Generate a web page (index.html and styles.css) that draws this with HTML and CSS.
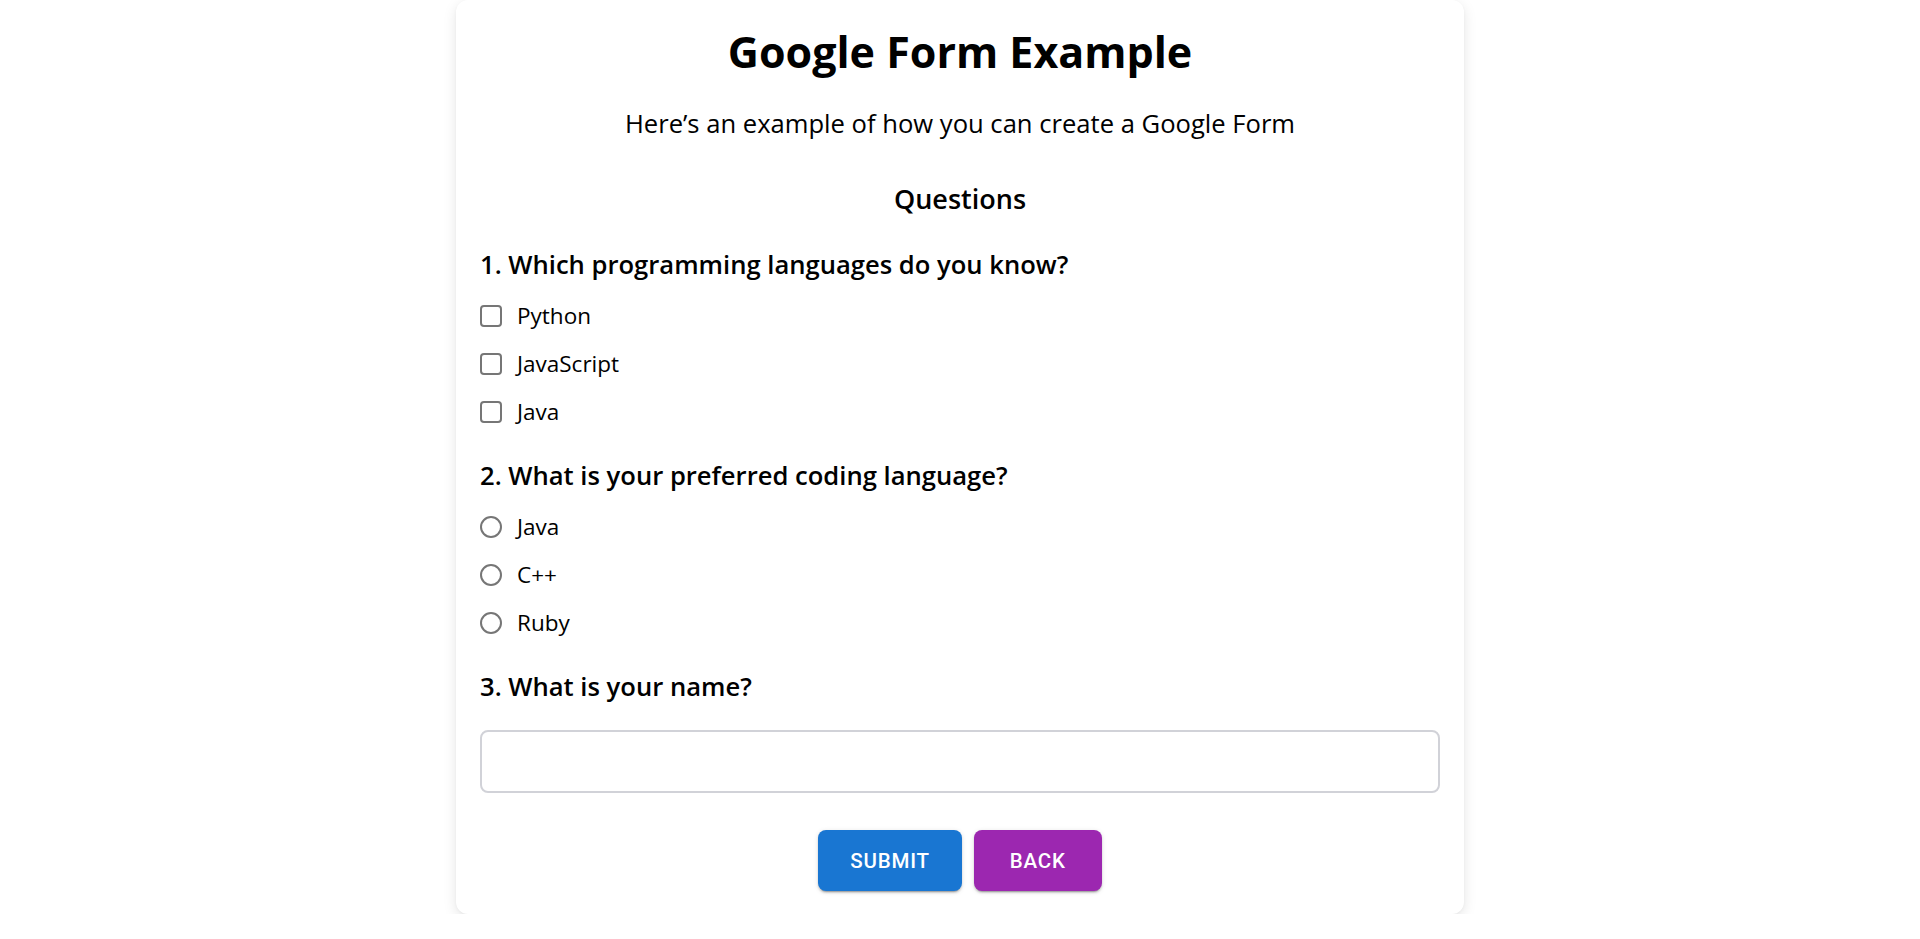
FILE: index.html
```html
<!DOCTYPE html>
<html lang="en">
<head>
<meta charset="utf-8">
<title>Google Form Example</title>
<link rel="stylesheet" href="styles.css">
</head>
<body>
<main class="card">
  <h1 class="title">Google Form Example</h1>
  <p class="subtitle">Here’s an example of how you can create a Google Form</p>
  <h2 class="section">Questions</h2>

  <section class="question">
    <h3 class="q-label">1. Which programming languages do you know?</h3>
    <label class="option"><input type="checkbox" class="check"><span>Python</span></label>
    <label class="option"><input type="checkbox" class="check"><span>JavaScript</span></label>
    <label class="option"><input type="checkbox" class="check"><span>Java</span></label>
  </section>

  <section class="question">
    <h3 class="q-label">2. What is your preferred coding language?</h3>
    <label class="option"><input type="radio" name="pref" class="radio"><span>Java</span></label>
    <label class="option"><input type="radio" name="pref" class="radio"><span>C++</span></label>
    <label class="option"><input type="radio" name="pref" class="radio"><span>Ruby</span></label>
  </section>

  <section class="question">
    <h3 class="q-label">3. What is your name?</h3>
    <input type="text" class="text-input">
  </section>

  <div class="actions">
    <button class="btn btn-submit" type="button">Submit</button>
    <button class="btn btn-back" type="button">Back</button>
  </div>
</main>
</body>
</html>
```

FILE: styles.css
```css
* { box-sizing: border-box; }

html, body {
  margin: 0;
  padding: 0;
  background: #ffffff;
}

body {
  font-family: "Open Sans", "Noto Sans", "Liberation Sans", sans-serif;
  color: #000;
}

.card {
  width: 1008px;
  margin: 0 auto;
  padding: 25px 24px 23px;
  background: #fff;
  border-radius: 12px;
  box-shadow: 0 4px 14px rgba(0, 0, 0, 0.10), 0 1px 3px rgba(0, 0, 0, 0.04);
  display: flex;
  flex-direction: column;
}

.title {
  margin: 0;
  font-size: 43px;
  line-height: 54px;
  font-weight: 700;
  text-align: center;
}

.subtitle {
  margin: 27px 0 0;
  font-size: 25.6px;
  line-height: 36px;
  font-weight: 400;
  text-align: center;
}

.section {
  margin: 39px 0 0;
  font-size: 27px;
  line-height: 36px;
  font-weight: 600;
  text-align: center;
}

.question {
  display: flex;
  flex-direction: column;
  margin-top: 24px;
}

.section + .question {
  margin-top: 32px;
}

.q-label {
  margin: 0 0 11px;
  font-size: 25.6px;
  line-height: 32px;
  font-weight: 600;
}

.option {
  display: flex;
  align-items: center;
  gap: 15px;
  height: 48px;
  font-size: 22.5px;
  line-height: 48px;
}

.check,
.radio {
  appearance: none;
  -webkit-appearance: none;
  margin: 0;
  width: 22px;
  height: 22px;
  border: 2px solid #767676;
  background: #fff;
  flex: none;
}

.check {
  border-radius: 4px;
}

.radio {
  border-radius: 50%;
}

.text-input {
  margin-top: 16px;
  width: 100%;
  height: 63px;
  border: 2px solid #d1d2d8;
  border-radius: 8px;
  background: #fff;
  font-size: 22px;
  padding: 0 16px;
  font-family: inherit;
}

.actions {
  display: flex;
  justify-content: center;
  gap: 12px;
  margin-top: 37px;
}

.btn {
  height: 61px;
  min-width: 128px;
  padding: 0 32px;
  border: none;
  border-radius: 8px;
  font-family: Roboto, "Liberation Sans", sans-serif;
  font-size: 20.5px;
  font-weight: 500;
  letter-spacing: 0.8px;
  text-transform: uppercase;
  color: #fff;
  cursor: pointer;
  box-shadow: 0 3px 1px -2px rgba(0, 0, 0, 0.2), 0 2px 2px 0 rgba(0, 0, 0, 0.14), 0 1px 5px 0 rgba(0, 0, 0, 0.12);
}

.btn-submit {
  background: #1976d2;
}

.btn-back {
  background: #9c27b0;
}
```
